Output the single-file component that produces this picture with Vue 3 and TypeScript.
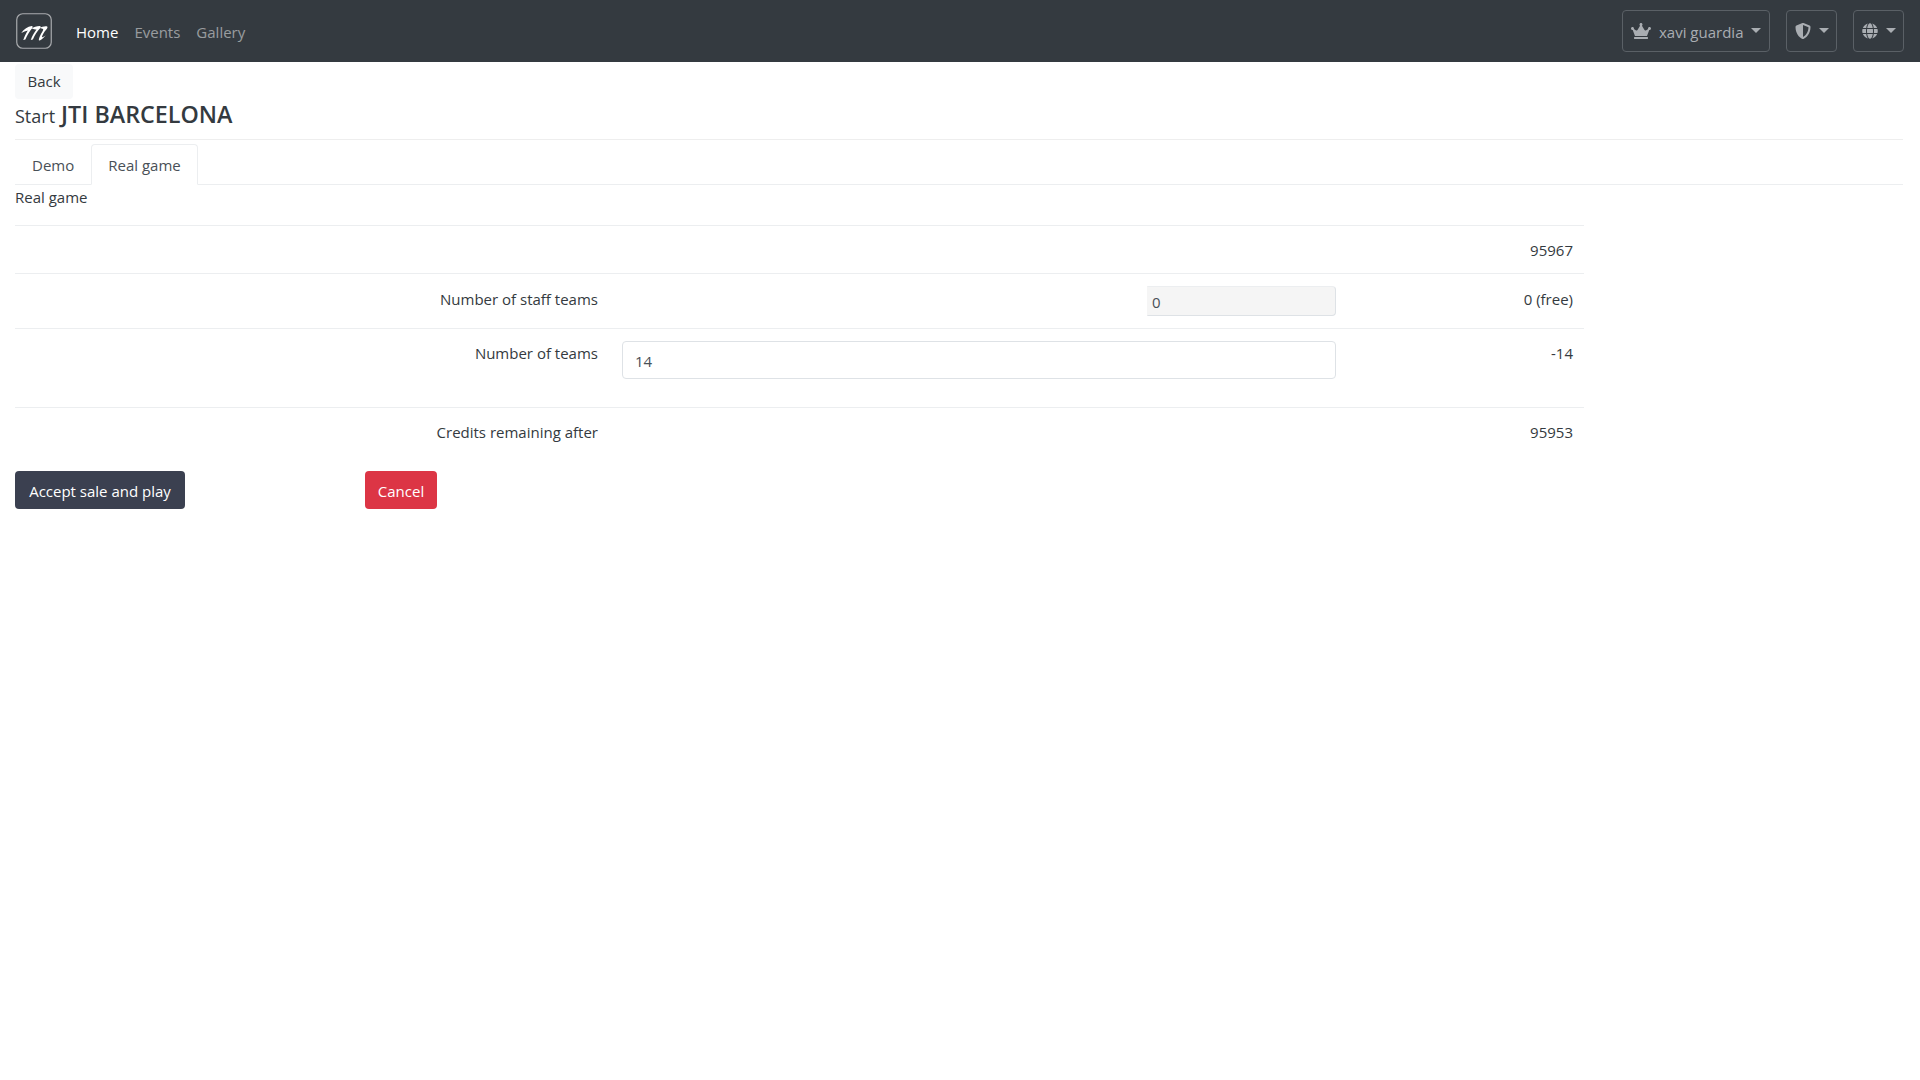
<script setup lang="ts">
const navLinks = [
  { label: 'Home', active: true },
  { label: 'Events', active: false },
  { label: 'Gallery', active: false },
]
</script>

<template>
  <div class="page">
    <nav class="navbar">
      <a class="brand">
        <svg viewBox="0 0 36 36" width="36" height="36">
          <rect x="0.75" y="0.75" width="34.5" height="34.5" rx="6" fill="none" stroke="#a9abae" stroke-width="1.2" />
          <g transform="translate(4.500 0) skewX(-12)">
            <path fill="#fff" d="M5 20C7 16 10 13.500 14 13C15 13 15.500 14 15 15C13 18 11.500 22 10.500 26.500L8.500 27C9 23 10 20 11 17.500C9 18 7 19 5 20Z" />
            <path fill="#fff" d="M14.500 15.500C16 14 19 13 22 13C23 13 23.500 14 23 15C20.500 18 19 22 18 26.500L16 27C16.500 23 18 19 19.500 16.500C18 16.500 16 16 14.500 15.500Z" />
            <path fill="#fff" d="M22.500 15C24 14 27 13 29.500 13.500C30.500 14 30 15.500 29 17C27.500 19.500 26.500 22 26.500 24C27 24.500 28 24 30 22.500C28 25.500 25.500 27.500 24.500 27.500C23.500 27 24 23 25.500 19.500C26 18 26.500 16.500 26 16C25 15.500 24 15.500 22.500 15Z" />
          </g>
        </svg>
      </a>
      <ul class="nav-links">
        <li v-for="l in navLinks" :key="l.label" :class="{ active: l.active }">{{ l.label }}</li>
      </ul>
      <div class="nav-right">
        <button class="nav-btn user">
          <svg class="ic crown" viewBox="0 0 640 512" width="20" height="16"><path fill="currentColor" d="M528 448H112c-8.800 0-16 7.200-16 16v32c0 8.800 7.200 16 16 16h416c8.800 0 16-7.200 16-16v-32c0-8.800-7.200-16-16-16zm64-320c-26.500 0-48 21.500-48 48 0 7.100 1.600 13.700 4.400 19.800L476 239.200c-15.400 9.200-35.300 4-44.200-11.600L350.300 85C361 76.200 368 63 368 48c0-26.500-21.500-48-48-48s-48 21.500-48 48c0 15 7 28.200 17.700 37l-81.500 142.600c-8.900 15.600-28.900 20.800-44.200 11.600l-72.300-43.400c2.700-6 4.400-12.700 4.400-19.800 0-26.500-21.500-48-48-48S0 149.500 0 176s21.500 48 48 48c2.600 0 5.200-.4 7.700-.8L128 416h384l72.300-192.800c2.500.4 5.100.8 7.700.8 26.500 0 48-21.500 48-48s-21.500-48-48-48z" /></svg>
          <span class="who">xavi guardia</span><i class="caret" />
        </button>
        <button class="nav-btn small">
          <svg class="ic" viewBox="0 0 512 512" width="16" height="16"><path fill="currentColor" d="M466.500 83.700l-192-80a48.150 48.150 0 0 0-36.900 0l-192 80C27.700 91.100 16 108.600 16 128c0 198.500 114.500 335.700 221.500 380.300 11.800 4.900 25.100 4.900 36.900 0C360.100 472.600 496 349.300 496 128c0-19.400-11.700-36.900-29.500-44.300zM256.100 446.300l-.1-381 175.900 73.300c-3.300 151.400-82.100 261.100-175.800 307.700z" /></svg>
          <i class="caret" />
        </button>
        <button class="nav-btn small">
          <svg class="ic" viewBox="0 0 496 512" width="16" height="16"><path fill="currentColor" d="M336.500 160C322 70.700 287.800 8 248 8s-74 62.700-88.500 152h177zM152 256c0 22.200 1.200 43.500 3.300 64h185.300c2.100-20.500 3.300-41.800 3.300-64s-1.200-43.500-3.300-64H155.300c-2.100 20.500-3.300 41.800-3.300 64zm324.700-96c-28.600-67.900-86.500-120.400-158-141.600 24.400 33.800 41.200 84.700 50 141.600h108zM177.200 18.400C105.800 39.600 47.800 92.100 19.300 160h108c8.700-56.900 25.500-107.800 49.900-141.600zM487.400 192H372.700c2.100 21 3.300 42.500 3.300 64s-1.200 43-3.300 64h114.600c5.500-20.500 8.600-41.800 8.600-64s-3.100-43.500-8.500-64zM120 256c0-21.500 1.200-43 3.300-64H8.600C3.200 212.500 0 233.800 0 256s3.200 43.500 8.600 64h114.600c-2-21-3.200-42.500-3.200-64zm39.500 96c14.500 89.300 48.700 152 88.500 152s74-62.700 88.500-152h-177zm159.300 141.600c71.400-21.200 129.400-73.700 158-141.600h-108c-8.800 56.900-25.600 107.800-50 141.600zM19.300 352c28.600 67.900 86.500 120.400 158 141.600-24.400-33.800-41.200-84.700-50-141.600h-108z" /></svg>
          <i class="caret" />
        </button>
      </div>
    </nav>

    <main class="content">
      <button class="btn-back">Back</button>
      <h4 class="title"><small>Start</small> JTI BARCELONA</h4>
      <hr class="sep" />
      <ul class="tabs">
        <li>Demo</li>
        <li class="active">Real game</li>
      </ul>
      <p class="pane-title">Real game</p>

      <div class="sheet">
        <div class="row r1"><div class="lbl"></div><div class="mid"></div><div class="val">95967</div></div>
        <div class="row r2">
          <div class="lbl">Number of staff teams</div>
          <div class="mid end"><input class="field ro" value="0" readonly /></div>
          <div class="val">0 (free)</div>
        </div>
        <div class="row r3">
          <div class="lbl">Number of teams</div>
          <div class="mid"><input class="field" value="14" /></div>
          <div class="val">-14</div>
        </div>
        <div class="row r4"><div class="lbl">Credits remaining after</div><div class="mid"></div><div class="val">95953</div></div>
      </div>

      <div class="actions">
        <button class="btn dark">Accept sale and play</button>
        <button class="btn red">Cancel</button>
      </div>
    </main>
  </div>
</template>

<style scoped>
.page {
  font-family: "Open Sans", "Noto Sans", sans-serif;
  font-size: 15px;
  line-height: 24px;
  color: #343a40;
  min-height: 1080px;
  background: #fff;
}
.navbar {
  height: 62px;
  box-sizing: border-box;
  background: #343a40;
  display: flex;
  align-items: center;
  padding: 0 16px;
}
.brand { display: flex; width: 36px; height: 36px; margin-right: 24px; }
.nav-links { display: flex; gap: 16px; list-style: none; margin: 1px 0 0; padding: 0; color: rgba(255,255,255,.5); }
.nav-links .active { color: #fff; }
.nav-right { margin-left: auto; display: flex; gap: 16px; }
.nav-btn {
  height: 42px;
  box-sizing: border-box;
  display: flex;
  align-items: center;
  background: transparent;
  border: 1px solid #5a6066;
  border-radius: 4px;
  color: #a9adb2;
  font: inherit;
  padding: 0 8px;
  white-space: nowrap;
}
.nav-btn.user { width: 148px; }
.nav-btn.small { width: 51px; }
.ic { flex: none; }
.crown { margin-right: 8px; }
.who { margin-top: 1px; }
.caret {
  width: 0; height: 0; margin-left: 8px; margin-top: -2px;
  border-top: 5px solid #a9adb2;
  border-left: 5px solid transparent;
  border-right: 5px solid transparent;
}
.content { padding: 2px 17px 0 15px; }
.btn-back {
  display: block;
  width: 58px; height: 35px;
  background: #f8f9fa;
  border: none;
  border-radius: 4px;
  font: inherit;
  color: #343a40;
  padding: 0 0 2px;
}
.title { margin: 0; font-size: 23.3px; font-weight: 600; line-height: 30px; height: 40px; }
.title small { font-size: 18px; font-weight: 400; }
.sep { border: none; border-top: 1px solid #eee; margin: 0 0 4px; }
.tabs { display: flex; list-style: none; margin: 0; padding: 0; border-bottom: 1px solid #eceef0; height: 40px; }
.tabs li { padding: 8px 16px; box-sizing: border-box; height: 41px; border: 1px solid transparent; border-radius: 4px 4px 0 0; color: #495057; }
.tabs .active { border-color: #eceef0 #eceef0 #fff; background: #fff; }
.pane-title { margin: 0; height: 40px; }
.sheet { width: 1569px; }
.row { display: grid; grid-template-columns: 595px 738px 236px; border-top: 1px solid #eceef0; box-sizing: border-box; }
.lbl { text-align: right; padding: 12px 12px 0 0; }
.mid { padding: 12px 12px 0; }
.mid.end { display: flex; justify-content: flex-end; }
.val { text-align: right; padding: 12px 11px 0 0; }
.r1 { height: 48px; }
.r2 { height: 55px; }
.r3 { height: 79px; }
.r4 { height: 50px; }
.r2 .lbl { padding-top: 13px; }
.r2 .val { padding-top: 13px; }
.r3 .lbl, .r3 .val { padding-top: 12px; }
.field {
  display: block;
  box-sizing: border-box;
  width: 100%;
  height: 38px;
  padding: 2px 12px 0;
  border: 1px solid #dee2e6;
  border-radius: 4px;
  font: inherit;
  color: #495057;
  background: #fff;
}
.field.ro { width: 189px; height: 30px; padding: 2px 4px 0; background: #f5f5f5; border-left-color: transparent; border-top-color: #eceef0; border-radius: 0 4px 4px 0; }
.actions { display: flex; margin-top: 14px; }
.btn { height: 38px; border: none; border-radius: 4px; font: inherit; color: #fff; padding: 1px 0 0; }
.dark { width: 170px; background: #3b4050; margin-right: 180px; }
.red { width: 72px; background: #dc3545; }
</style>
